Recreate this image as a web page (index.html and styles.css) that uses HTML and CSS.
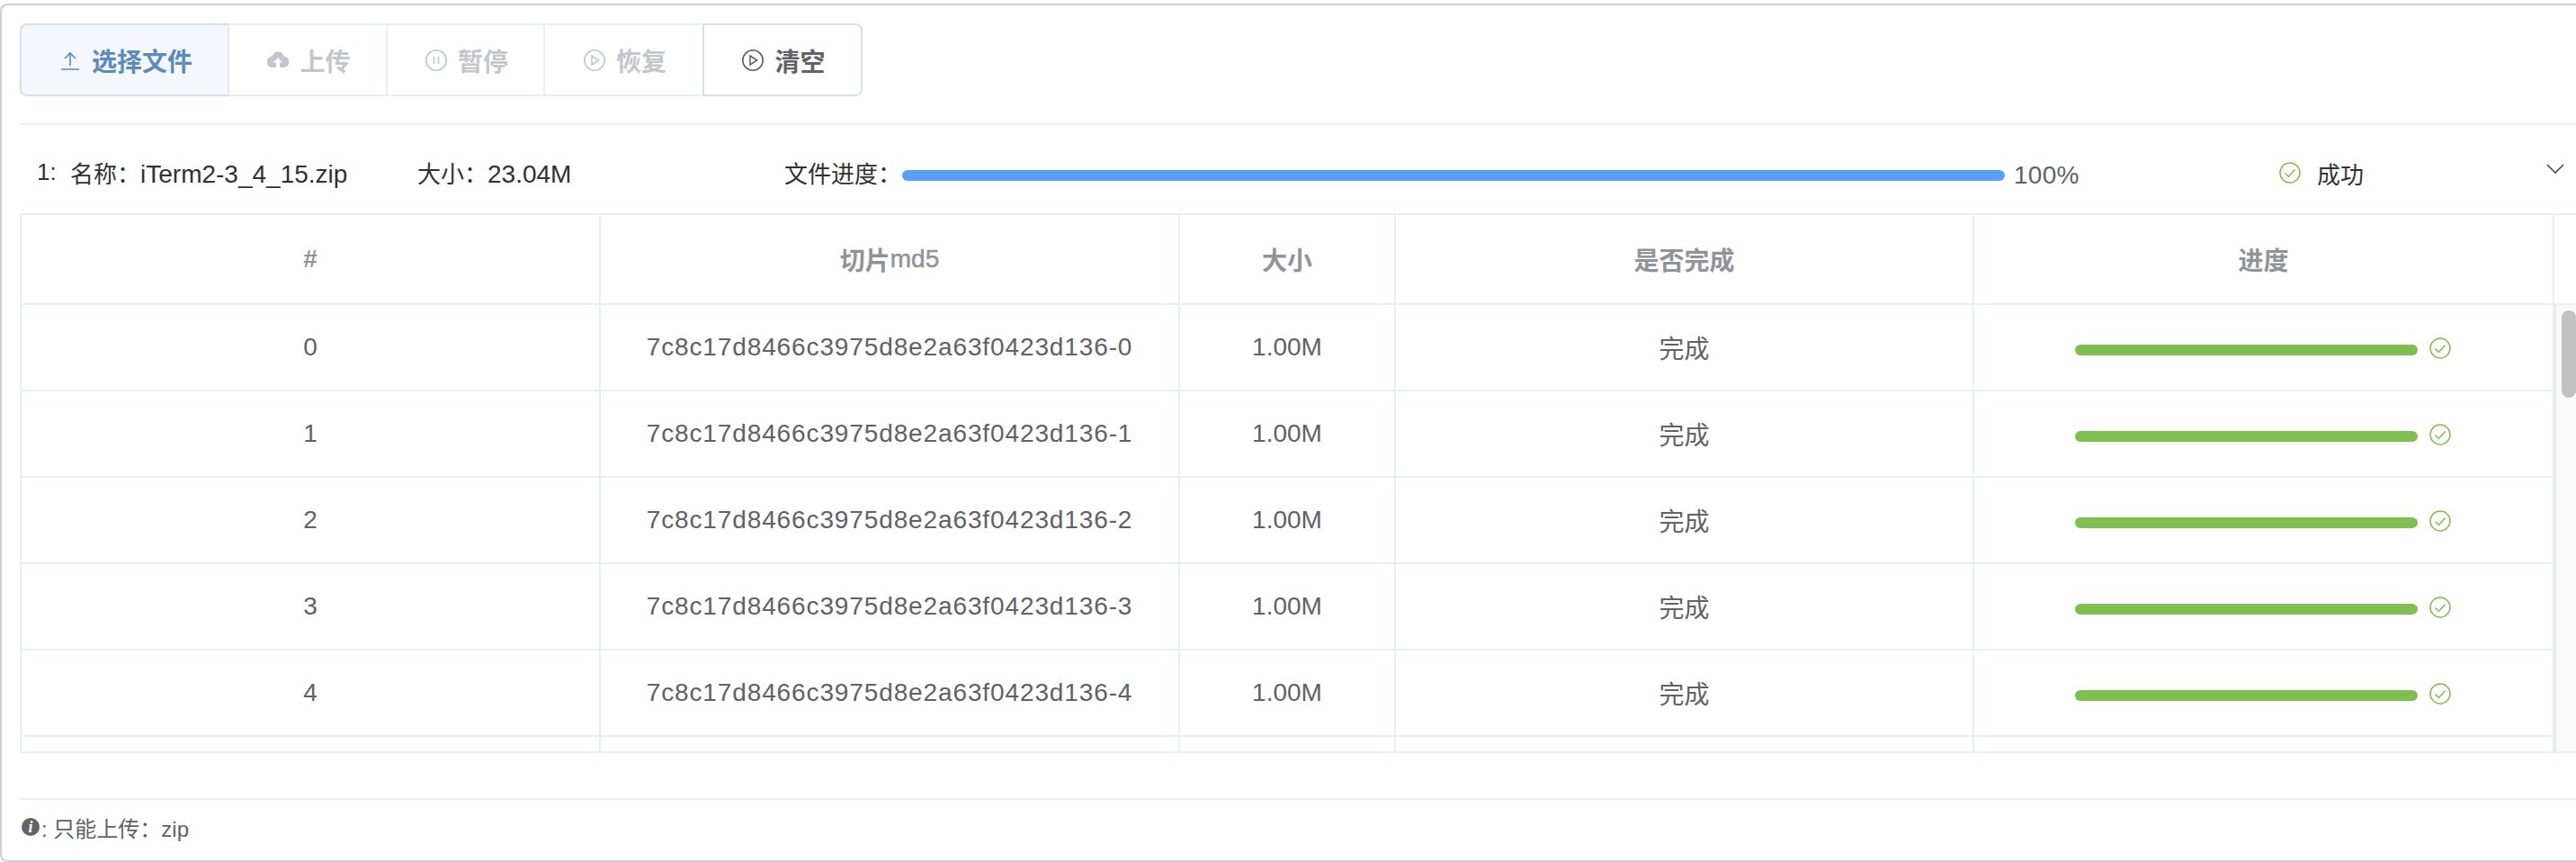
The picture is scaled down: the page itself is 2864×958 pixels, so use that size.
FILE: index.html
```html
<!DOCTYPE html>
<html lang="zh">
<head>
<meta charset="utf-8">
<title>上传</title>
<link rel="stylesheet" href="styles.css">
</head>
<body>
<div class="card">
  <div class="toolbar-row">
    <div class="btn-group">
      <button class="btn btn-primary">
        <svg class="ico" viewBox="0 0 24 24"><path d="M12 18V4M6 10l6-6 6 6M2 22h20"/></svg>选择文件</button>
      <button class="btn btn-off">
        <svg class="ico ico-fill" viewBox="0 0 24 24"><path d="M12 2.500a6.500 6.500 0 0 1 6.300 5A6 6 0 0 1 18 20h-4v-5.500h3.200L12 9l-5.200 5.500H10V20H6a6 6 0 0 1-.3-12.500 6.500 6.500 0 0 1 6.300-5z"/></svg>上传</button>
      <button class="btn btn-off btn-narrow">
        <svg class="ico" viewBox="0 0 24 24"><circle cx="12" cy="12" r="11.200"/><path d="M9.500 8v8M14.500 8v8"/></svg>暂停</button>
      <button class="btn btn-off btn-wide">
        <svg class="ico" viewBox="0 0 24 24"><circle cx="12" cy="12" r="11.200"/><path d="M9 7l7.500 5L9 17z"/></svg>恢复</button>
      <button class="btn btn-clear">
        <svg class="ico" viewBox="0 0 24 24"><circle cx="12" cy="12" r="11.200"/><path d="M9 7l7.500 5L9 17z"/></svg>清空</button>
    </div>
  </div>

  <div class="file-row">
    <span class="f-index">1:</span>
    <span class="f-name">名称：<span class="latin">iTerm2-3_4_15.zip</span></span>
    <span class="f-size">大小：<span class="latin">23.04M</span></span>
    <span class="f-label">文件进度：</span>
    <div class="f-bar"></div>
    <span class="f-pct">100%</span>
    <span class="f-status">
      <svg class="check" viewBox="0 0 24 24"><circle cx="12" cy="12" r="11"/><path d="M6.500 12.500l4 4 7-8"/></svg>成功</span>
    <svg class="chevron" viewBox="0 0 20 11"><path d="M1 1l9 9 9-9"/></svg>
  </div>

  <div class="table">
    <div class="t-head">
      <div class="t-cell">#</div>
      <div class="t-cell">切片<span class="md5-head">md5</span></div>
      <div class="t-cell">大小</div>
      <div class="t-cell">是否完成</div>
      <div class="t-cell">进度</div>
      <div class="t-gutter"></div>
    </div>
    <div class="t-scroll">
      <div class="t-body">
        <div class="t-row">
          <div class="t-cell">0</div><div class="t-cell t-md5">7c8c17d8466c3975d8e2a63f0423d136-0</div><div class="t-cell">1.00M</div><div class="t-cell">完成</div>
          <div class="t-cell t-prog"><div class="prog"></div><svg class="check check-row" viewBox="0 0 24 24"><circle cx="12" cy="12" r="11"/><path d="M6.500 12.500l4 4 7-8"/></svg></div>
        </div>
        <div class="t-row">
          <div class="t-cell">1</div><div class="t-cell t-md5">7c8c17d8466c3975d8e2a63f0423d136-1</div><div class="t-cell">1.00M</div><div class="t-cell">完成</div>
          <div class="t-cell t-prog"><div class="prog"></div><svg class="check check-row" viewBox="0 0 24 24"><circle cx="12" cy="12" r="11"/><path d="M6.500 12.500l4 4 7-8"/></svg></div>
        </div>
        <div class="t-row">
          <div class="t-cell">2</div><div class="t-cell t-md5">7c8c17d8466c3975d8e2a63f0423d136-2</div><div class="t-cell">1.00M</div><div class="t-cell">完成</div>
          <div class="t-cell t-prog"><div class="prog"></div><svg class="check check-row" viewBox="0 0 24 24"><circle cx="12" cy="12" r="11"/><path d="M6.500 12.500l4 4 7-8"/></svg></div>
        </div>
        <div class="t-row">
          <div class="t-cell">3</div><div class="t-cell t-md5">7c8c17d8466c3975d8e2a63f0423d136-3</div><div class="t-cell">1.00M</div><div class="t-cell">完成</div>
          <div class="t-cell t-prog"><div class="prog"></div><svg class="check check-row" viewBox="0 0 24 24"><circle cx="12" cy="12" r="11"/><path d="M6.500 12.500l4 4 7-8"/></svg></div>
        </div>
        <div class="t-row">
          <div class="t-cell">4</div><div class="t-cell t-md5">7c8c17d8466c3975d8e2a63f0423d136-4</div><div class="t-cell">1.00M</div><div class="t-cell">完成</div>
          <div class="t-cell t-prog"><div class="prog"></div><svg class="check check-row" viewBox="0 0 24 24"><circle cx="12" cy="12" r="11"/><path d="M6.500 12.500l4 4 7-8"/></svg></div>
        </div>
        <div class="t-row">
          <div class="t-cell"></div><div class="t-cell"></div><div class="t-cell"></div><div class="t-cell"></div><div class="t-cell"></div>
        </div>
      </div>
      <div class="scrollbar"><div class="thumb"></div></div>
    </div>
  </div>

  <div class="spacer"></div>

  <div class="footer">
    <svg class="info" viewBox="0 0 20 20"><circle cx="10" cy="10" r="10"/><text x="10" y="15.500" class="info-i">i</text></svg>
    <span>: 只能上传：zip</span>
  </div>
</div>
</body>
</html>
```
FILE: styles.css
```css
* { box-sizing: border-box; }
html, body { margin: 0; padding: 0; background: #fff; overflow: hidden; }
body {
  height: 958px;
  padding-top: 4px;
  font-family: "Liberation Sans", "Noto Sans CJK SC", sans-serif;
  font-size: 26px;
  color: #606266;
}
.card {
  height: 954px;
  border: 2px solid #cfcfcf;
  border-right: 0;
  border-radius: 8px 0 0 8px;
  padding-left: 20px;
  display: flex;
  flex-direction: column;
}
.toolbar-row {
  padding: 20px 0 30px;
  border-bottom: 2px solid #eeeff4;
  flex: none;
}
.btn-group { display: flex; height: 81px; }
.btn {
  flex: 0 0 auto;
  height: 81px;
  display: flex;
  align-items: center;
  justify-content: center;
  gap: 12px;
  background: #fff;
  border: 2px solid #ebeef5;
  border-left-width: 0;
  font: bold 28px "Liberation Sans", "Noto Sans CJK SC", sans-serif;
  padding: 0 0 0 3px;
  width: 176px;
}
.btn-narrow { width: 175px; }
.btn-wide { width: 177px; }
.btn-primary {
  width: 233px;
  background: #f4f8fd;
  border: 2px solid #cfe0f2;
  border-right-color: #e3eaf4;
  border-radius: 8px 0 0 8px;
  color: #5b8abf;
}
.btn-off { color: #c3c6cd; }
.btn-clear {
  color: #606266;
  border: 2px solid #dcdfe6;
  border-radius: 0 8px 8px 0;
  margin-left: -2px;
  width: 178px;
}
.ico {
  width: 24px;
  height: 24px;
  fill: none;
  stroke: currentColor;
  stroke-width: 1.600;
  flex: none;
}
.ico-fill { fill: currentColor; stroke: none; }

.file-row {
  height: 98px;
  flex: none;
  display: flex;
  align-items: center;
  color: #303133;
  position: relative;
  padding: 6px 0 0 19px;
}
.latin { font-size: 28px; }
.f-index { width: 37px; }
.f-name { width: 386px; }
.f-size { width: 408px; }
.f-label { width: 131px; }
.f-bar { width: 1226px; height: 12px; border-radius: 6px; background: #579ffb; margin-top: 8px; }
.f-pct { width: 305px; font-size: 28px; letter-spacing: 0.3px; color: #606266; padding-left: 10px; margin-top: 8px; }
.f-status { display: flex; align-items: center; gap: 18px; width: 298px; margin-top: 2px; }
.chevron {
  width: 20px;
  height: 11px;
  fill: none;
  stroke: #303133;
  stroke-width: 1.300;
  position: absolute;
  right: 13px;
  top: 43px;
}
.check {
  width: 24px;
  height: 24px;
  fill: none;
  stroke: #7fbf50;
  stroke-width: 1.500;
  flex: none;
}
.check-row { margin-top: 2px; }

.table {
  flex: none;
  height: 600px;
  border-top: 2px solid #ebeef5;
  border-bottom: 2px solid #ebeef5;
  border-left: 2px solid #ebeef5;
  overflow: hidden;
  font-size: 28px;
}
.t-head, .t-row {
  display: grid;
  grid-template-columns: 644px 644px 240px 643px 645px;
}
.t-head {
  height: 100px;
  grid-template-columns: 644px 644px 240px 643px 645px 1fr;
  border-bottom: 2px solid #ebeef5;
  font-weight: bold;
  color: #909399;
}
.md5-head { font-weight: normal; -webkit-text-stroke: 0.5px #909399; }
.t-cell {
  display: flex;
  align-items: center;
  justify-content: center;
  border-right: 2px solid #ebeef5;
}
.t-md5 { letter-spacing: 0.88px; }
.t-prog { padding-right: 1px; }
.t-scroll { display: flex; height: 496px; overflow: hidden; }
.t-body { flex: none; width: 2816px; }
.t-row { height: 96px; border-bottom: 2px solid #ebeef5; }
.prog { width: 381px; height: 12px; border-radius: 6px; background: #7fbf50; margin: 6px 13px 0 0; }
.scrollbar {
  flex: 1;
  background: #fafafa;
  border-left: 2px solid #e9e9ec;
  padding: 6px 0 0 6px;
}
.thumb { height: 97px; border-radius: 8px; background: #c1c1c1; }

.spacer { height: 52px; flex: none; border-bottom: 2px solid #eeeff4; }
.footer {
  flex: 1;
  display: flex;
  align-items: center;
  font-size: 24px;
  color: #606266;
  padding: 0 0 7px 2px;
}
.info { width: 20px; height: 20px; fill: #606266; margin-right: 2px; }
.info-i { fill: #fff; font: italic bold 18px "Liberation Serif", serif; text-anchor: middle; }
```
